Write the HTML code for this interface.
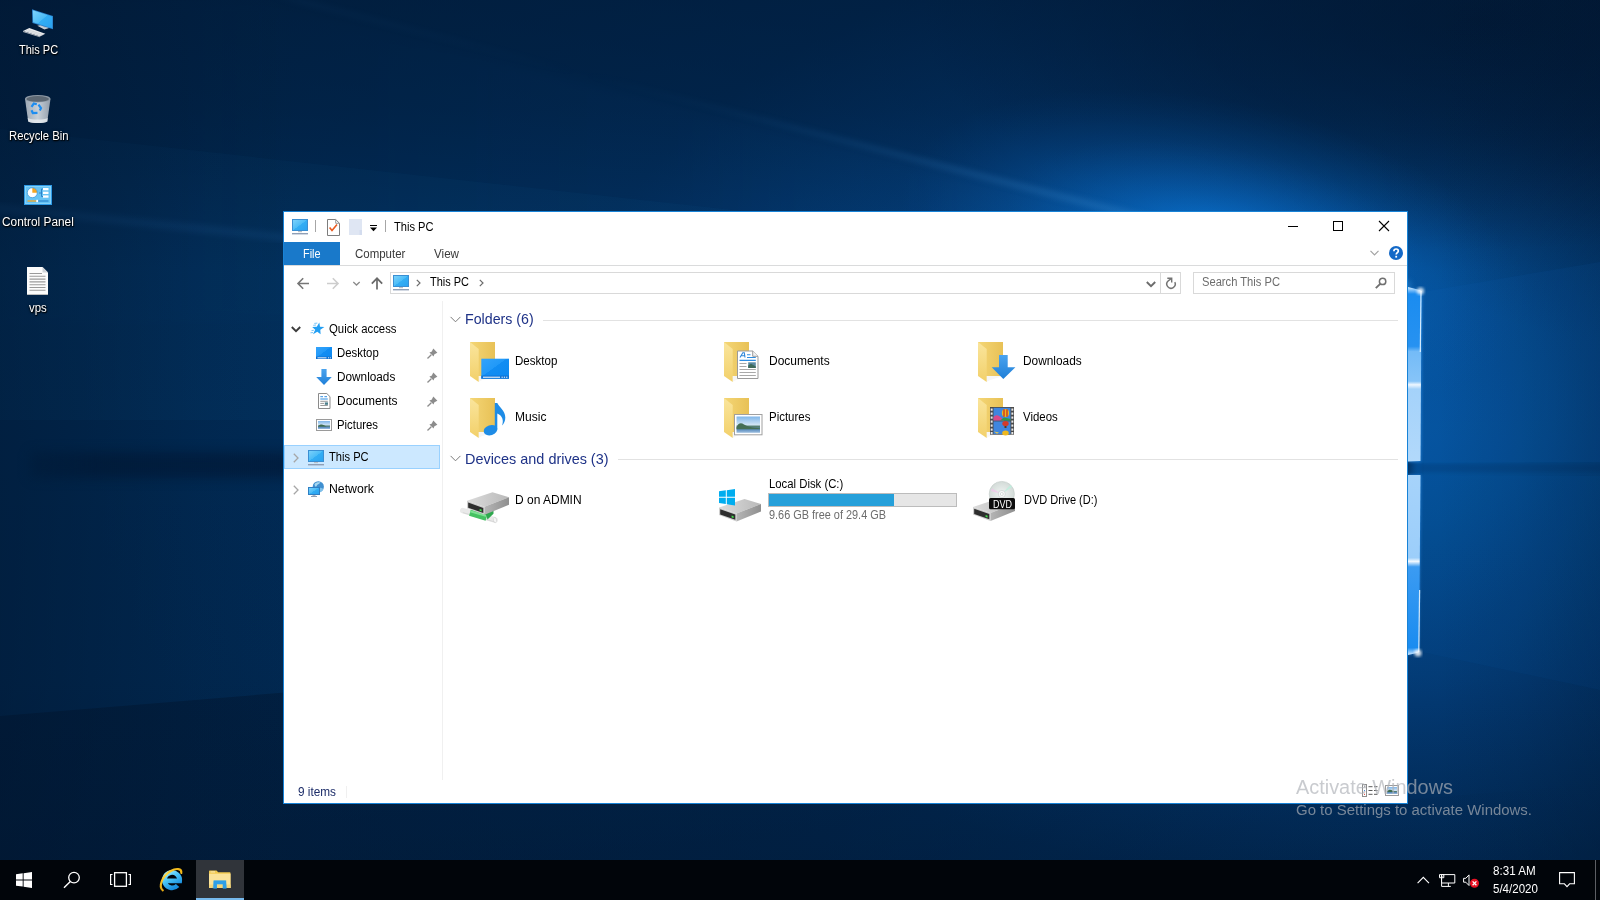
<!DOCTYPE html>
<html lang="en">
<head>
<meta charset="utf-8">
<title>This PC</title>
<style>
*{box-sizing:border-box;margin:0;padding:0}
html,body{width:1600px;height:900px;overflow:hidden;background:#03214a}
body{font-family:"Liberation Sans",sans-serif;font-size:12px;color:#000;position:relative}
#wall,#desk,#win,#wm,#taskbar{position:absolute;left:0;top:0;width:1600px;height:900px;overflow:hidden}
.t{position:absolute;white-space:nowrap;display:block;transform-origin:0 50%}
.sh{text-shadow:0 1px 2px rgba(0,0,0,.95),1px 1px 1px rgba(0,0,0,.8),0 0 3px rgba(0,0,0,.5)}
.b{position:absolute}
svg{position:absolute;overflow:visible}
#wall svg{left:0;top:0}
.frame{left:283px;top:211px;width:1125px;height:593px;background:#fff;border:1px solid #1883d7}
.filetab{left:284px;top:242px;width:56px;height:23px;background:#1979ca}
.hline{height:1px;background:#dadbdc}
.box{border:1px solid #d9d9d9;background:#fff}
.sel{left:284px;top:445px;width:156px;height:24px;background:#cce8ff;border:1px solid #99d1ff}
.tb{left:0;top:860px;width:1600px;height:40px;background:#01050a}
.tbsel{left:196px;top:860px;width:48px;height:40px;background:#30343a}
.tbul{left:196px;top:898px;width:48px;height:2px;background:#76b9ed}

</style>
</head>
<body>
<svg width="0" height="0" style="left:0;top:0">
<defs>
<linearGradient id="scr" x1="0" y1="0" x2="1" y2="1"><stop offset="0" stop-color="#7fd3fb"/><stop offset=".5" stop-color="#4bbcf7"/><stop offset=".51" stop-color="#33aef4"/><stop offset="1" stop-color="#2aa2f0"/></linearGradient>
<linearGradient id="dsk" x1="0" y1="0" x2="1" y2="1"><stop offset="0" stop-color="#33a3fb"/><stop offset=".45" stop-color="#2199f8"/><stop offset=".46" stop-color="#118df3"/><stop offset="1" stop-color="#0c88f0"/></linearGradient>
<linearGradient id="fb" x1="0" y1="0" x2="1" y2="0"><stop offset="0" stop-color="#f4d676"/><stop offset="1" stop-color="#e8c156"/></linearGradient>
<linearGradient id="ff" x1="0" y1="0" x2="0" y2="1"><stop offset="0" stop-color="#fae59c"/><stop offset="1" stop-color="#f2d06a"/></linearGradient>
<linearGradient id="arr" x1="0" y1="0" x2="0" y2="1"><stop offset="0" stop-color="#4aa3ee"/><stop offset="1" stop-color="#1f7fd8"/></linearGradient>
<linearGradient id="sky" x1="0" y1="0" x2="0" y2="1"><stop offset="0" stop-color="#7fb6ea"/><stop offset=".5" stop-color="#cfe4f5"/><stop offset=".62" stop-color="#4f7a6a"/><stop offset=".8" stop-color="#5f8fc0"/><stop offset="1" stop-color="#9fc0e0"/></linearGradient>
<linearGradient id="dtop" x1="0" y1="0" x2="1" y2="0"><stop offset="0" stop-color="#dcdcdc"/><stop offset="1" stop-color="#b9b9b9"/></linearGradient>
<linearGradient id="dside" x1="0" y1="0" x2="1" y2="0"><stop offset="0" stop-color="#b5b5b5"/><stop offset="1" stop-color="#8f8f8f"/></linearGradient>
<radialGradient id="disc" cx=".5" cy=".5" r=".5"><stop offset="0" stop-color="#f4f7f6"/><stop offset=".25" stop-color="#e9eeec"/><stop offset="1" stop-color="#d3dbd8"/></radialGradient>
<linearGradient id="bin" x1="0" y1="0" x2="1" y2="0"><stop offset="0" stop-color="#aab4bf"/><stop offset=".5" stop-color="#d9dfe5"/><stop offset="1" stop-color="#9fa9b5"/></linearGradient>
<!-- reusable icons -->
<g id="i-mon"><rect x=".5" y=".5" width="15" height="11" fill="url(#scr)" stroke="#3a8fd3"/><rect x="6" y="12" width="4" height="1.2" fill="#b9c1c9"/><rect x="0" y="14" width="16" height="1.4" fill="#8f9fb6"/></g>
<g id="i-folder"><rect x="2" y="2" width="25" height="34" fill="url(#fb)"/><polygon points="2,2 10.7,9 10.7,42 2,36" fill="url(#ff)"/><polygon points="10.7,42 13,40.5 27,36 10.7,36" fill="#c9c9c9" opacity=".16"/></g>
<g id="i-pin"><path d="M6.3.6 10.4 4.7 9.3 5.3 7.2 6.4 6.6 8.6 2.4 4.4 4.6 3.8 5.7 1.7Z" fill="#8c8c8c"/><path d="M4.3 6.7.5 10.5" stroke="#8c8c8c" stroke-width="1.3"/></g>
<g id="i-drive"><polygon points="0,8.5 25.5,0 42,5 17.5,14.5" fill="url(#dtop)"/><polygon points="0,8.5 17.5,14.5 17.5,22.5 0,16" fill="#cfcfcf"/><polygon points="1.2,10.3 16.3,15.6 16.3,20.8 1.2,15.4" fill="#2e2e2e"/><polygon points="17.5,14.5 42,5 42,12.5 17.5,22.5" fill="url(#dside)"/><rect x="12.6" y="16.6" width="2" height="1.8" fill="#3fe04a" transform="skewY(19)" transform-origin="12.6 16.6"/></g>
</defs>
</svg>

<div id="wall"><svg width="1600" height="900" viewBox="0 0 1600 900">
<defs>
<radialGradient id="g1" gradientUnits="userSpaceOnUse" cx="1330" cy="400" r="1250" gradientTransform="translate(1330 400) scale(1 .62) translate(-1330 -400)">
<stop offset="0" stop-color="#0557a6"/><stop offset=".18" stop-color="#044d92"/><stop offset=".4" stop-color="#033b76"/><stop offset=".62" stop-color="#012d5b"/><stop offset="1" stop-color="#012850"/>
</radialGradient>
<linearGradient id="g2" x1="0" y1="0" x2="0" y2="1"><stop offset="0" stop-color="#01152e" stop-opacity=".52"/><stop offset=".12" stop-color="#01152e" stop-opacity=".4"/><stop offset=".3" stop-color="#01152e" stop-opacity=".04"/><stop offset=".5" stop-color="#01152e" stop-opacity="0"/><stop offset=".75" stop-color="#01152e" stop-opacity=".05"/><stop offset="1" stop-color="#01122a" stop-opacity=".3"/></linearGradient>
<linearGradient id="gb" gradientUnits="userSpaceOnUse" x1="1410" y1="0" x2="0" y2="0"><stop offset="0" stop-color="#1b84e0" stop-opacity=".55"/><stop offset=".4" stop-color="#1570c8" stop-opacity=".3"/><stop offset="1" stop-color="#0d5aa8" stop-opacity=".05"/></linearGradient>
<linearGradient id="gs" gradientUnits="userSpaceOnUse" x1="1410" y1="0" x2="280" y2="0"><stop offset="0" stop-color="#4aa6f2" stop-opacity=".5"/><stop offset=".5" stop-color="#3f9bea" stop-opacity=".38"/><stop offset="1" stop-color="#3f9bea" stop-opacity=".2"/></linearGradient>
<linearGradient id="gd" gradientUnits="userSpaceOnUse" x1="1410" y1="0" x2="0" y2="0"><stop offset="0" stop-color="#011734" stop-opacity=".8"/><stop offset=".5" stop-color="#011734" stop-opacity=".7"/><stop offset=".93" stop-color="#011734" stop-opacity=".6"/><stop offset="1" stop-color="#011734" stop-opacity=".2"/></linearGradient>
<radialGradient id="gg" cx=".5" cy=".5" r=".5"><stop offset="0" stop-color="#0b82ea" stop-opacity="1"/><stop offset=".45" stop-color="#086cca" stop-opacity=".6"/><stop offset="1" stop-color="#0658aa" stop-opacity="0"/></radialGradient>
<radialGradient id="gk" cx=".5" cy=".5" r=".5"><stop offset="0" stop-color="#01152e" stop-opacity=".7"/><stop offset=".5" stop-color="#01152e" stop-opacity=".45"/><stop offset="1" stop-color="#01152e" stop-opacity="0"/></radialGradient>
<linearGradient id="gl" gradientUnits="userSpaceOnUse" x1="0" y1="0" x2="1600" y2="0"><stop offset="0" stop-color="#01152e" stop-opacity=".5"/><stop offset=".5" stop-color="#01152e" stop-opacity=".36"/><stop offset=".8" stop-color="#01152e" stop-opacity=".1"/><stop offset="1" stop-color="#01152e" stop-opacity="0"/></linearGradient>
<linearGradient id="gv" gradientUnits="userSpaceOnUse" x1="0" y1="0" x2="300" y2="0"><stop offset="0" stop-color="#01142c" stop-opacity=".42"/><stop offset=".33" stop-color="#01142c" stop-opacity=".25"/><stop offset=".66" stop-color="#01142c" stop-opacity=".08"/><stop offset="1" stop-color="#01142c" stop-opacity="0"/></linearGradient>
<linearGradient id="gw" gradientUnits="userSpaceOnUse" x1="1600" y1="0" x2="1440" y2="0"><stop offset="0" stop-color="#01142c" stop-opacity=".3"/><stop offset=".5" stop-color="#01142c" stop-opacity=".12"/><stop offset="1" stop-color="#01142c" stop-opacity="0"/></linearGradient>
<filter color-interpolation-filters="sRGB" id="b6" x="-10%" y="-150%" width="120%" height="400%"><feGaussianBlur stdDeviation="6"/></filter>
<filter color-interpolation-filters="sRGB" id="b2" x="-20%" y="-20%" width="140%" height="140%"><feGaussianBlur stdDeviation="1.5"/></filter>
<filter color-interpolation-filters="sRGB" id="b3" x="-10%" y="-10%" width="120%" height="120%"><feGaussianBlur stdDeviation="3"/></filter>
<linearGradient id="ge" x1="0" y1="0" x2="0" y2="1"><stop offset="0" stop-color="#cfe9ff"/><stop offset=".04" stop-color="#1a8cf0"/><stop offset=".34" stop-color="#2792f1"/><stop offset=".37" stop-color="#74bbf7"/><stop offset=".54" stop-color="#86c4f8"/><stop offset=".56" stop-color="#eef7ff"/><stop offset=".585" stop-color="#a4d2fa"/><stop offset="1" stop-color="#b2d9fb"/></linearGradient><linearGradient id="gf" x1="0" y1="0" x2="0" y2="1"><stop offset="0" stop-color="#a6d3fa"/><stop offset=".46" stop-color="#9ccefa"/><stop offset=".48" stop-color="#f2f9ff"/><stop offset=".51" stop-color="#3b9bf2"/><stop offset=".96" stop-color="#1a8cf0"/><stop offset="1" stop-color="#cfe9ff"/></linearGradient>
</defs>
<rect width="1600" height="900" fill="url(#g1)"/>
<!-- dark top-right corner -->
<ellipse cx="1480" cy="20" rx="560" ry="230" fill="url(#gk)"/>
<ellipse cx="1600" cy="150" rx="230" ry="190" fill="url(#gk)" opacity=".22"/>
<!-- upper beam interior -->
<polygon points="1410,285 260,0 -100,0 -100,330" fill="url(#gb)" opacity=".3" filter="url(#b6)"/>
<!-- bright glow above window right -->
<ellipse cx="1215" cy="250" rx="320" ry="150" fill="url(#gg)" transform="rotate(12 1215 250)"/><ellipse cx="1215" cy="232" rx="210" ry="85" fill="url(#gg)" opacity=".85" transform="rotate(10 1215 232)"/>
<polygon points="1410,285 -100,118 -100,420 1410,420" fill="#2a80d4" opacity=".06"/>
<path d="M-20 206 300 239" stroke="#3f8fe0" stroke-width="7" opacity=".13" filter="url(#b3)"/>
<!-- beam edge highlight -->
<polygon points="1410,282 270,-5 300,0 1410,290" fill="url(#gs)" filter="url(#b3)"/>
<!-- horizon dark band -->
<rect x="30" y="452" width="1380" height="26" fill="url(#gd)" filter="url(#b6)"/>
<rect x="1420" y="464" width="200" height="8" fill="#032150" opacity=".15" filter="url(#b2)"/>
<polygon points="-50,720 1400,601 1400,800 1650,780 1650,950 -50,950" fill="url(#gl)"/>
<rect width="1600" height="900" fill="url(#g2)"/>
<rect width="300" height="900" fill="url(#gv)"/>
<rect x="1440" width="160" height="900" fill="url(#gw)"/>
<!-- right pane faint -->
<polygon points="1422,292 1600,262 1600,462 1422,463" fill="#1a78d8" opacity=".07"/>
<polygon points="1422,475 1600,476 1600,690 1422,652" fill="#1a78d8" opacity=".05"/>
<!-- logo left edge -->
<g filter="url(#b2)"><polygon points="1408,288 1422,291 1421,462 1408,462" fill="#2f93ee" opacity=".7"/><polygon points="1408,475 1421,475 1419,652 1408,655" fill="#2f93ee" opacity=".7"/></g>
<polygon points="1408,287 1421.500,290.500 1420.500,461 1408,461.500" fill="url(#ge)"/>
<polygon points="1408,475 1420.500,475 1419,652.500 1408,655" fill="url(#gf)"/>
<path d="M1421 291 1420.300 352" stroke="#e6f4ff" stroke-width="1.200" opacity=".9"/>
<path d="M1419.600 590 1418.800 652" stroke="#e6f4ff" stroke-width="1.200" opacity=".9"/>
<circle cx="1420.500" cy="291" r="3.500" fill="#fff" opacity=".8" filter="url(#b2)"/>
<circle cx="1418" cy="653" r="3.500" fill="#fff" opacity=".85" filter="url(#b2)"/>
</svg></div>

<div id="desk">
<!-- This PC -->
<svg style="left:22px;top:6px" width="32" height="32" viewBox="0 0 32 32"><polygon points="15.300,19.700 20.700,18.500 27.800,21.800 22.400,23.600" fill="#c9ced4"/><polygon points="19.500,19 22.500,18.300 25.500,21 22.500,21.800" fill="#aeb5bd"/><polygon points="10,3.200 31,10 31,23.300 10.400,17" fill="#2a7fc9"/><polygon points="10.800,4.300 30.200,10.600 30.200,22.200 11.100,16.300" fill="url(#scr)"/><polygon points="1,25 7.300,22 23.300,27.800 18,30.400" fill="#e9eaec"/><polygon points="1,25 18,30.400 18,31.300 1,25.900" fill="#b5b9bf"/><path d="M4 24.700 19 29.700M6 23.800 21 28.800" stroke="#c4c8cd" stroke-width=".6"/></svg>
<!-- Recycle Bin -->
<svg style="left:22px;top:92px" width="32" height="34" viewBox="0 0 32 34"><path d="M3 6.700 6.200 29.500C10 31.500 21.500 31.500 25.300 29.500L28.500 6.700Z" fill="url(#bin)" opacity=".92"/><ellipse cx="15.700" cy="6.700" rx="12.700" ry="3.700" fill="#8e99a5"/><ellipse cx="15.700" cy="6.900" rx="11.300" ry="2.800" fill="#5d6873"/><path d="M6.200 29.500C10 31.500 21.500 31.500 25.300 29.500L25.800 26C21 28 10.500 28 5.700 26Z" fill="#eef1f4" opacity=".7"/><g fill="none" stroke="#1e8df0" stroke-width="2.200"><path d="M9.500 14.800 11.800 11.500 14.800 12.300"/><path d="M16.500 12.700 19 16.200 17.800 18.500"/><path d="M15.500 20.800 10.800 21 9.500 18.200"/></g></svg>
<!-- Control Panel -->
<svg style="left:24px;top:185px" width="28" height="20" viewBox="0 0 28 20"><rect x=".5" y=".5" width="27" height="19" fill="#66c3f4" stroke="#2e9ae6"/><rect x="1.500" y="1.500" width="25" height="17" fill="none" stroke="#8dd6fa" stroke-width=".8"/><circle cx="8.300" cy="7.700" r="5" fill="#fff"/><path d="M8.300 7.700V2.700A5 5 0 0 1 13.300 7.700Z" fill="#f5a623"/><circle cx="8.300" cy="7.700" r="5" fill="none" stroke="#2f8fd8" stroke-width=".7"/><rect x="19" y="3" width="5.500" height="2.300" fill="#fff"/><rect x="19" y="6.700" width="5.500" height="2.300" fill="#fff"/><rect x="19" y="10.400" width="5.500" height="2.300" fill="#fff"/><path d="M15 8H17.500M17.500 4V11.500M17.500 4H19M17.500 11.500H19" stroke="#1f76c2" stroke-width=".8" fill="none"/><path d="M3.500 16H12.500" stroke="#f5a623" stroke-width="1.300"/><path d="M14 16H24.500" stroke="#1f76c2" stroke-width="1"/><rect x="12.300" y="14.800" width="1.800" height="2.400" fill="#fff"/></svg>
<!-- vps text file -->
<svg style="left:27px;top:267px" width="22" height="28" viewBox="0 0 22 28"><path d="M0 0H15.500L21 5.500V28H0Z" fill="#fcfcfc"/><path d="M15.500 0V5.500H21Z" fill="#cfd3d8"/><path d="M2.500 6.500H15M2.500 9.300H18.500M2.500 12.100H18.500M2.500 14.900H18.500M2.500 17.700H18.500M2.500 20.500H18.500M2.500 23.300H18.500" stroke="#9a9a9a" stroke-width="1.100"/><path d="M0 27.500H21" stroke="#bdbdbd" stroke-width="1"/></svg>

<span class="t L-desk sh" style="left:18.7px;top:41.67px;font-size:12.5px;line-height:16px;color:#fff;transform:scaleX(0.8796);">This PC</span>
<span class="t L-desk sh" style="left:8.5px;top:127.97px;font-size:12.5px;line-height:16px;color:#fff;transform:scaleX(0.9015);">Recycle Bin</span>
<span class="t L-desk sh" style="left:2.0px;top:214.47px;font-size:12.5px;line-height:16px;color:#fff;transform:scaleX(0.9479);">Control Panel</span>
<span class="t L-desk sh" style="left:29.3px;top:299.67px;font-size:12.5px;line-height:16px;color:#fff;transform:scaleX(0.9099);">vps</span>
</div>
<div id="win">
<div class="b frame"></div>
<!-- title bar quick access toolbar -->
<svg style="left:292px;top:219px" width="16" height="16"><use href="#i-mon"/></svg>
<div class="b" style="left:315px;top:220px;width:1px;height:12px;background:#a6a6a6"></div>
<svg style="left:327px;top:219px" width="13" height="17" viewBox="0 0 13 17"><path d="M.5.5H8.7L12.5 4.3V16.5H.5Z" fill="#fff" stroke="#7d7d7d"/><path d="M8.7.5V4.3H12.5" fill="none" stroke="#9a9a9a"/><path d="M2.6 8.6 5 11.4 10 5.6" fill="none" stroke="#ea5a1f" stroke-width="1.6"/></svg>
<svg style="left:349px;top:219px" width="13" height="17" viewBox="0 0 13 17"><path d="M0 0H13V16H0Z" fill="#dfe6f3"/><path d="M10.5 11H13V16H10.5Z" fill="#d3dcee"/></svg>
<svg style="left:370px;top:224px" width="8" height="8" viewBox="0 0 8 8"><rect x="0" y="1" width="7" height="1" fill="#000"/><path d="M0 3.6H7L3.5 7.2Z" fill="#000"/></svg>
<div class="b" style="left:385px;top:220px;width:1px;height:12px;background:#a6a6a6"></div>
<!-- caption buttons -->
<svg style="left:1288px;top:221px" width="102" height="11" viewBox="0 0 102 11"><path d="M0 5.5H10" stroke="#000" stroke-width="1"/><rect x="45.5" y=".5" width="9" height="9" fill="none" stroke="#000"/><path d="M91 0 101 10M101 0 91 10" stroke="#000" stroke-width="1.1"/></svg>
<!-- ribbon -->
<div class="b filetab"></div>
<div class="b hline" style="left:284px;top:265px;width:1123px"></div>
<svg style="left:1370px;top:250px" width="9" height="6" viewBox="0 0 9 6"><path d="M.5.8 4.5 4.8 8.5.8" fill="none" stroke="#a3a3a3" stroke-width="1.2"/></svg>
<svg style="left:1389px;top:246px" width="14" height="14" viewBox="0 0 14 14"><circle cx="7" cy="7" r="7" fill="#1469c7"/><path d="M4.9 5.2C4.9 3.6 6 3 7.1 3 8.4 3 9.3 3.8 9.3 4.9 9.3 6.6 7.2 6.7 7.2 8.6" fill="none" stroke="#fff" stroke-width="1.7"/><rect x="6.3" y="9.8" width="1.8" height="1.8" fill="#fff"/></svg>
<!-- nav buttons -->
<svg style="left:297px;top:277px" width="90" height="13" viewBox="0 0 90 13"><path d="M12 6.5H1.2M6.2 1.3 1 6.5 6.2 11.7" fill="none" stroke="#767676" stroke-width="1.6"/><path d="M30 6.5H40.8M35.8 1.3 41 6.5 35.8 11.7" fill="none" stroke="#cdcdcd" stroke-width="1.6"/><path d="M56.3 5 59.5 8 62.7 5" fill="none" stroke="#8a8a8a" stroke-width="1.3"/><path d="M80 12.5V1.4M74.8 6.6 80 1.3 85.2 6.6" fill="none" stroke="#696969" stroke-width="1.7"/></svg>
<!-- address box -->
<div class="b box" style="left:390px;top:272px;width:771px;height:22px"></div>
<div class="b box" style="left:1160px;top:272px;width:21px;height:22px"></div>
<svg style="left:393px;top:275px" width="16" height="16"><use href="#i-mon"/></svg>
<svg style="left:416px;top:279px" width="5" height="8" viewBox="0 0 5 8"><path d="M.8.8 4 4 .8 7.2" fill="none" stroke="#6b6b6b" stroke-width="1.2"/></svg>
<svg style="left:479px;top:279px" width="5" height="8" viewBox="0 0 5 8"><path d="M.8.8 4 4 .8 7.2" fill="none" stroke="#6b6b6b" stroke-width="1.2"/></svg>
<svg style="left:1146px;top:280.800px" width="10" height="7" viewBox="0 0 10 7"><path d="M.8 1 5 5.200 9.200 1" fill="none" stroke="#6c6c6c" stroke-width="1.900"/></svg>
<svg style="left:1165px;top:277px" width="12" height="12" viewBox="0 0 12 12"><path d="M9.800 5.200A4.200 4.200 0 1 1 3.100 4 L6.200 1.600" fill="none" stroke="#747474" stroke-width="1.500"/><path d="M2.300 1.300H6.700V5.600" fill="none" stroke="#747474" stroke-width="1.400"/></svg>
<!-- search box -->
<div class="b box" style="left:1193px;top:272px;width:202px;height:22px"></div>
<svg style="left:1375px;top:277px" width="12" height="12" viewBox="0 0 12 12"><circle cx="7.6" cy="4.4" r="3.2" fill="none" stroke="#707070" stroke-width="1.5"/><path d="M5.2 6.8.8 11.2" stroke="#707070" stroke-width="1.9"/></svg>
<!-- nav pane -->
<div class="b" style="left:442px;top:301px;width:1px;height:479px;background:#f0f0f0"></div>
<div class="b sel"></div>
<svg style="left:291px;top:326px" width="10" height="7" viewBox="0 0 10 7"><path d="M.8 1 5 5.200 9.200 1" fill="none" stroke="#3c3c3c" stroke-width="1.900"/></svg>
<svg style="left:293px;top:453px" width="6" height="10" viewBox="0 0 6 10"><path d="M.8.8 5 5 .8 9.2" fill="none" stroke="#a6a6a6" stroke-width="1.3"/></svg>
<svg style="left:293px;top:485px" width="6" height="10" viewBox="0 0 6 10"><path d="M.8.8 5 5 .8 9.2" fill="none" stroke="#a6a6a6" stroke-width="1.3"/></svg>
<!-- quick access star -->
<svg style="left:310px;top:322px" width="15" height="14" viewBox="0 0 15 14"><polygon points="9.3,0.6 10.0,4.8 14.4,5.0 10.3,7.8 10.6,12.2 7.3,9.7 3.0,12.2 5.2,7.8 2.2,5.0 6.8,4.8" fill="#239ff3"/><path d="M4.300 1.400 7.300 1.100M3.300 3.300 6 3M1.500 8.600 3.800 8.300M.5 10.800 3 10.500" stroke="#7cc6f7" stroke-width="1"/></svg>
<!-- nav desktop -->
<svg style="left:316px;top:347px" width="16" height="12" viewBox="0 0 16 12"><rect width="16" height="12" fill="url(#dsk)"/><rect y="9.6" width="16" height="2.4" fill="#0d6fd0"/><rect x="1.5" y="10.4" width="9" height=".9" fill="#fff"/><rect x="12" y="10.4" width="1" height=".9" fill="#fff"/><rect x="13.8" y="10.4" width="1" height=".9" fill="#fff"/></svg>
<!-- nav downloads -->
<svg style="left:316px;top:369px" width="16" height="16" viewBox="0 0 16 16"><path d="M5.4 0H10.6V8H15.8L8 16 .2 8H5.4Z" fill="url(#arr)"/></svg>
<!-- nav documents -->
<svg style="left:318px;top:393px" width="13" height="16" viewBox="0 0 13 16"><path d="M.5.5H8.8L12 3.7V15.5H.5Z" fill="#fff" stroke="#8b8b8b"/><path d="M2.3 3.7H5M2.3 6H9.8M6.4 3.7H9" stroke="#2f8de0" stroke-width="1"/><path d="M2.3 8.3H9.8M2.3 10.4H6M2.3 12.5H9.8" stroke="#9a9a9a" stroke-width="1"/><rect x="6.8" y="9.4" width="3.2" height="2.4" fill="#4b7f8c"/></svg>
<!-- nav pictures -->
<svg style="left:316px;top:419px" width="16" height="12" viewBox="0 0 16 12"><rect x=".5" y=".5" width="15" height="11" fill="#fff" stroke="#9a9a9a"/><rect x="2" y="2" width="12" height="8" fill="url(#sky)"/><path d="M2 7.2C4 5 6 5 8 6.2L10.5 7.6H2Z" fill="#3e6b4f"/></svg>
<!-- pins -->
<svg style="left:426.5px;top:347.5px" width="11" height="11"><use href="#i-pin"/></svg>
<svg style="left:426.5px;top:371.5px" width="11" height="11"><use href="#i-pin"/></svg>
<svg style="left:426.5px;top:395.5px" width="11" height="11"><use href="#i-pin"/></svg>
<svg style="left:426.5px;top:419.5px" width="11" height="11"><use href="#i-pin"/></svg>
<!-- nav this pc / network -->
<svg style="left:308px;top:450px" width="16" height="16"><use href="#i-mon"/></svg>
<svg style="left:308px;top:481px" width="16" height="16" viewBox="0 0 16 16"><circle cx="10.3" cy="5.8" r="5.6" fill="#3f8fd0"/><path d="M6.5 3.2C8 1 11 .8 12.5 1.6 11 3.5 9.5 3 8.6 5 8 6.5 6.8 5.5 6.5 3.2Z" fill="#a8d8f0"/><path d="M11 7c1.5-.5 3 0 4.3 1-.6 1.7-1.700 2.700-3.300 3.200z" fill="#7fc0ea"/><rect x=".5" y="6.5" width="11" height="7" fill="url(#scr)" stroke="#2f7fc4"/><rect x="4.500" y="14" width="3" height=".8" fill="#9aa7b5"/><rect x="3" y="15" width="6" height="1" fill="#8f9fb6"/></svg>
<!-- group headers -->
<svg style="left:450px;top:316px" width="11" height="7" viewBox="0 0 11 7"><path d="M.6.9 5.5 5.8 10.4.9" fill="none" stroke="#7b7b7b" stroke-width="1"/></svg>
<div class="b" style="left:543px;top:320px;width:855px;height:1px;background:#e2e2e2"></div>
<svg style="left:450px;top:455px" width="11" height="7" viewBox="0 0 11 7"><path d="M.6.9 5.5 5.8 10.4.9" fill="none" stroke="#7b7b7b" stroke-width="1"/></svg>
<div class="b" style="left:618px;top:459px;width:780px;height:1px;background:#e2e2e2"></div>
<!-- folders: Desktop -->
<svg style="left:468px;top:340px" width="48" height="44" viewBox="0 0 48 44"><use href="#i-folder"/><rect x="13.3" y="18.700" width="27.700" height="20" fill="url(#dsk)"/><rect x="13.3" y="35.6" width="27.700" height="3.1" fill="#0e72d4"/><rect x="15" y="36.700" width="17" height="1" fill="#fff"/><rect x="33.5" y="36.700" width="1.3" height="1" fill="#fff"/><rect x="35.8" y="36.700" width="1.3" height="1" fill="#fff"/><rect x="38.100" y="36.700" width="1.3" height="1" fill="#fff"/></svg>
<!-- Documents -->
<svg style="left:722px;top:340px" width="48" height="44" viewBox="0 0 48 44"><use href="#i-folder"/><path d="M15.500 11H30.700L36 16.300V38.500H15.500Z" fill="#fff" stroke="#9b9b9b"/><path d="M30.700 11V16.300H36" fill="#f1f1f1" stroke="#9b9b9b"/><path d="M18 17.500 20.800 12.800H22.300L23 17.500M19.300 15.800H22.600" fill="none" stroke="#2d86da" stroke-width="1.1"/><path d="M25 14.800H28.500M25 17.500H33.800M17.500 20.400H33.800" stroke="#2d8de2" stroke-width="1.1"/><path d="M17.500 23.500H24.500M17.500 26.500H24.500M17.500 29.500H33.800M17.500 32.500H33.800M17.500 35.500H33.800" stroke="#a9a9a9" stroke-width="1"/><rect x="26.200" y="22.300" width="7.600" height="5.600" fill="#5d8aa0"/><path d="M26.200 27.900V25.500L29 23.800 33.800 26.500V27.900Z" fill="#3f6a5a"/></svg>
<!-- Downloads -->
<svg style="left:976px;top:340px" width="48" height="44" viewBox="0 0 48 44"><use href="#i-folder"/><path d="M23 15H31.700V27.300H39.400L27.300 39.100 15.700 27.300H23Z" fill="url(#arr)"/></svg>
<!-- Music -->
<svg style="left:468px;top:396px" width="48" height="44" viewBox="0 0 48 44"><use href="#i-folder"/><ellipse cx="22.500" cy="34.200" rx="7" ry="5" fill="#1e8ce6" transform="rotate(-18 22.500 34.200)"/><path d="M26.800 7H29.300C30.500 10.500 37.300 14.500 37.300 21.500 37.300 25 36 27.500 34 29.500 36 25 34.500 19.500 29.300 17.500V33.500H26.800Z" fill="#1e8ce6"/></svg>
<!-- Pictures -->
<svg style="left:722px;top:396px" width="48" height="44" viewBox="0 0 48 44"><use href="#i-folder"/><rect x="12.500" y="18.500" width="27.500" height="20.300" fill="#fff" stroke="#a0a0a0"/><rect x="14.500" y="20.500" width="23.500" height="16.300" fill="url(#sky)"/><path d="M14.500 31.500C16 27 19 26 22 28.500 26 31 30 31.500 38 32.300V33.300H14.500Z" fill="#456f55"/></svg>
<!-- Videos -->
<svg style="left:976px;top:396px" width="48" height="44" viewBox="0 0 48 44"><use href="#i-folder"/><rect x="14" y="11" width="24" height="27.700" fill="#4a4a4a"/><rect x="17.500" y="11.800" width="17" height="12.600" fill="#3f86df"/><rect x="17.500" y="25.400" width="17" height="12.600" fill="#3f86df"/><g fill="#e9e9e9"><rect x="14.700" y="12.500" width="1.900" height="2.200"/><rect x="14.700" y="16.500" width="1.900" height="2.200"/><rect x="14.700" y="20.500" width="1.900" height="2.200"/><rect x="14.700" y="24.500" width="1.900" height="2.200"/><rect x="14.700" y="28.500" width="1.900" height="2.200"/><rect x="14.700" y="32.500" width="1.900" height="2.200"/><rect x="14.700" y="36" width="1.900" height="2.200"/><rect x="35.400" y="12.500" width="1.900" height="2.200"/><rect x="35.400" y="16.500" width="1.900" height="2.200"/><rect x="35.400" y="20.500" width="1.900" height="2.200"/><rect x="35.400" y="24.500" width="1.900" height="2.200"/><rect x="35.400" y="28.500" width="1.900" height="2.200"/><rect x="35.400" y="32.500" width="1.900" height="2.200"/><rect x="35.400" y="36" width="1.900" height="2.200"/></g><ellipse cx="29.500" cy="17" rx="3.600" ry="4" fill="#f0b81f"/><path d="M28 13.300V20.700M31 13.300V20.700" stroke="#c9311f" stroke-width="1.300"/><path d="M17.500 21C20 18 23 19 25 21.500L28 24.400H17.500Z" fill="#d94a8a"/><path d="M24 24.400 28 21.500 34.500 23V24.400Z" fill="#2f9a4a"/><ellipse cx="29.500" cy="27.500" rx="3.200" ry="2.600" fill="#d43a2a"/><rect x="28.500" y="30" width="2" height="2" fill="#5a3a1a"/><ellipse cx="29.500" cy="37" rx="3.300" ry="2.500" fill="#f0b81f"/><path d="M18 35.500 23 36.500 21 37.800Z" fill="#e8c84a"/></svg>
<!-- drives: D on ADMIN -->
<svg style="left:462px;top:492px" width="48" height="32" viewBox="0 0 48 32"><path d="M.8 18.600 33 28" stroke="#e9e9e9" stroke-width="5.600" stroke-linecap="round"/><path d="M.8 20.600 33 30" stroke="#cfcfcf" stroke-width="1" opacity=".7"/><path d="M8 20.700 24.500 25.500" stroke="#45c262" stroke-width="6.600"/><path d="M8.300 19.300 24.800 24.100" stroke="#7fe294" stroke-width="2"/><path d="M23.500 21.500 31.500 18.300V21.800L25.500 27.500Z" fill="#2fa84e"/><ellipse cx="33" cy="28" rx="1.600" ry="2.800" fill="#f6f6f6" stroke="#c9c9c9" stroke-width=".5" transform="rotate(-15 33 28)"/><g transform="translate(5 .3)"><use href="#i-drive"/></g></svg>
<!-- Local Disk -->
<svg style="left:719px;top:489px" width="44" height="33" viewBox="0 0 44 33"><g transform="translate(0 10)"><use href="#i-drive"/></g><path d="M0 2.300 6.800 1.300V7.700H0ZM7.800 1.200 16 0V7.700H7.800ZM0 8.700H6.800V15.100L0 14.100ZM7.800 8.700H16V16.400L7.800 15.200Z" fill="#00adef"/></svg>
<div class="b" style="left:768px;top:493px;width:189px;height:14px;border:1px solid #bcbcbc;background:#e6e6e6"></div>
<div class="b" style="left:769px;top:494px;width:125px;height:12px;background:#26a0da"></div>
<!-- DVD -->
<svg style="left:973px;top:480px" width="44" height="42" viewBox="0 0 44 42"><g transform="translate(0 18.500)"><use href="#i-drive"/></g><circle cx="28.800" cy="14" r="12.600" fill="url(#disc)" stroke="#c3cbc8" stroke-width=".6"/><path d="M28.800 14 19 8.500 18 11Z" fill="#f0c8ea" opacity=".8"/><path d="M28.800 14 37.500 5 39 7Z" fill="#bfeedd" opacity=".9"/><circle cx="28.800" cy="14" r="3.600" fill="#f7f9f8" stroke="#c9d0ce" stroke-width=".7"/><circle cx="28.800" cy="14" r="1.500" fill="#fff" stroke="#c0c7c5" stroke-width=".6"/><rect x="16" y="18" width="26" height="11.300" rx="1.600" fill="#0d0d0d"/></svg>
<div class="b" style="left:346px;top:786px;width:1px;height:12px;background:#f0f0f0"></div>
<!-- status bar view icons -->
<svg style="left:1362px;top:784px" width="16" height="13" viewBox="0 0 16 13"><rect x=".5" y=".5" width="4" height="12" fill="#fff" stroke="#8e8e8e"/><rect x="2" y="2.200" width="1" height="1" fill="#7a7a7a"/><rect x="2" y="6" width="1" height="1" fill="#3f8fe8"/><rect x="2" y="9.800" width="1" height="1" fill="#e03a2a"/><path d="M6.500 2.700H10.500M12 2.700H15.500M6.500 6.500H10.500M12 6.500H15.500M6.500 10.300H10.500M12 10.300H15.500" stroke="#5a5a5a" stroke-width="1"/></svg>
<svg style="left:1385px;top:785px" width="14" height="11" viewBox="0 0 14 11"><rect x=".5" y=".5" width="13" height="10" fill="#fff" stroke="#9a9a9a"/><rect x="2" y="2" width="10" height="7" fill="url(#sky)"/><path d="M2 6.500C4 4 6 4.500 8 6L9.500 7H2Z" fill="#3e6b4f"/></svg>

<span class="t L-win" style="left:393.5px;top:218.67px;font-size:12.5px;line-height:16px;color:#000;transform:scaleX(0.8886);">This PC</span>
<span class="t L-win" style="left:303.4px;top:245.67px;font-size:12.5px;line-height:16px;color:#fff;transform:scaleX(0.8732);">File</span>
<span class="t L-win" style="left:354.6px;top:245.67px;font-size:12.5px;line-height:16px;color:#3a3a3a;transform:scaleX(0.9182);">Computer</span>
<span class="t L-win" style="left:434.0px;top:245.67px;font-size:12.5px;line-height:16px;color:#3a3a3a;transform:scaleX(0.9302);">View</span>
<span class="t L-win" style="left:430.0px;top:273.97px;font-size:12.5px;line-height:16px;color:#000;transform:scaleX(0.8773);">This PC</span>
<span class="t L-win" style="left:1202.0px;top:274.47px;font-size:12.5px;line-height:16px;color:#6d6d6d;transform:scaleX(0.8933);">Search This PC</span>
<span class="t L-win" style="left:329.2px;top:320.67px;font-size:12.5px;line-height:16px;color:#000;transform:scaleX(0.9079);">Quick access</span>
<span class="t L-win" style="left:337.0px;top:344.67px;font-size:12.5px;line-height:16px;color:#000;transform:scaleX(0.9093);">Desktop</span>
<span class="t L-win" style="left:337.0px;top:368.67px;font-size:12.5px;line-height:16px;color:#000;transform:scaleX(0.9427);">Downloads</span>
<span class="t L-win" style="left:337.0px;top:392.67px;font-size:12.5px;line-height:16px;color:#000;transform:scaleX(0.9568);">Documents</span>
<span class="t L-win" style="left:337.0px;top:416.67px;font-size:12.5px;line-height:16px;color:#000;transform:scaleX(0.9080);">Pictures</span>
<span class="t L-win" style="left:329.0px;top:448.67px;font-size:12.5px;line-height:16px;color:#000;transform:scaleX(0.8908);">This PC</span>
<span class="t L-win" style="left:329.0px;top:480.67px;font-size:12.5px;line-height:16px;color:#000;transform:scaleX(0.9816);">Network</span>
<span class="t L-win" style="left:464.6px;top:310.48px;font-size:14.5px;line-height:19px;color:#1e3287;transform:scaleX(0.9799);">Folders (6)</span>
<span class="t L-win" style="left:464.8px;top:449.78px;font-size:14.5px;line-height:19px;color:#1e3287;transform:scaleX(0.9948);">Devices and drives (3)</span>
<span class="t L-win" style="left:515.2px;top:352.67px;font-size:12.5px;line-height:16px;color:#000;transform:scaleX(0.9224);">Desktop</span>
<span class="t L-win" style="left:769.3px;top:352.67px;font-size:12.5px;line-height:16px;color:#000;transform:scaleX(0.9599);">Documents</span>
<span class="t L-win" style="left:1023.3px;top:352.67px;font-size:12.5px;line-height:16px;color:#000;transform:scaleX(0.9492);">Downloads</span>
<span class="t L-win" style="left:515.2px;top:408.67px;font-size:12.5px;line-height:16px;color:#000;transform:scaleX(0.9615);">Music</span>
<span class="t L-win" style="left:769.3px;top:408.67px;font-size:12.5px;line-height:16px;color:#000;transform:scaleX(0.9168);">Pictures</span>
<span class="t L-win" style="left:1023.3px;top:408.67px;font-size:12.5px;line-height:16px;color:#000;transform:scaleX(0.9132);">Videos</span>
<span class="t L-win" style="left:515.4px;top:491.67px;font-size:12.5px;line-height:16px;color:#000;transform:scaleX(0.9587);">D on ADMIN</span>
<span class="t L-win" style="left:769.3px;top:475.67px;font-size:12.5px;line-height:16px;color:#000;transform:scaleX(0.9064);">Local Disk (C:)</span>
<span class="t L-win" style="left:769.3px;top:506.87px;font-size:12.5px;line-height:16px;color:#6d6d6d;transform:scaleX(0.8724);">9.66 GB free of 29.4 GB</span>
<span class="t L-win" style="left:1023.5px;top:491.67px;font-size:12.5px;line-height:16px;color:#000;transform:scaleX(0.8819);">DVD Drive (D:)</span>
<span class="t L-win" style="left:992.5px;top:496.66px;font-size:10.5px;line-height:14px;color:#fff;transform:scaleX(0.8569);">DVD</span>
<span class="t L-win" style="left:298.0px;top:783.67px;font-size:12.5px;line-height:16px;color:#1c2c68;transform:scaleX(0.9430);">9 items</span>
</div>
<div id="wm">
<span class="t L-wm" style="left:1295.5px;top:774.74px;font-size:19.5px;line-height:25px;color:rgba(176,178,184,.68);transform:scaleX(1.0202);">Activate Windows</span>
<span class="t L-wm" style="left:1295.5px;top:800.65px;font-size:14px;line-height:18px;color:rgba(176,178,184,.68);transform:scaleX(1.0679);">Go to Settings to activate Windows.</span>
</div>
<div id="taskbar">
<div class="b tb"></div>
<div class="b tbsel"></div>
<div class="b tbul"></div>
<!-- start -->
<svg style="left:16px;top:872px" width="16" height="16" viewBox="0 0 16 16"><path d="M0 2.300 6.700 1.300V7.500H0ZM7.600 1.200 16 0V7.500H7.600ZM0 8.400H6.700V14.600L0 13.700ZM7.600 8.400H16V16L7.600 14.800Z" fill="#fff"/></svg>
<!-- search -->
<svg style="left:63px;top:871px" width="18" height="18" viewBox="0 0 18 18"><circle cx="11" cy="6.600" r="5.300" fill="none" stroke="#fff" stroke-width="1.300"/><path d="M7.300 10.400 1 16.700" stroke="#fff" stroke-width="1.400"/></svg>
<!-- task view -->
<svg style="left:110px;top:872px" width="21" height="15" viewBox="0 0 21 15"><rect x="4.600" y=".7" width="11.800" height="13.600" fill="none" stroke="#fff" stroke-width="1.300"/><path d="M2.500 2.500H.6V12.500H2.500M18.500 2.500H20.400V12.500H18.500" fill="none" stroke="#fff" stroke-width="1.200"/></svg>
<!-- IE -->
<svg style="left:159px;top:867px" width="25" height="25" viewBox="0 0 25 25"><defs><linearGradient id="ieg" x1="0" y1="0" x2=".6" y2="1"><stop offset="0" stop-color="#9eeaff"/><stop offset=".45" stop-color="#4cc6f7"/><stop offset="1" stop-color="#1a90e0"/></linearGradient><linearGradient id="ier" x1="0" y1="1" x2="1" y2="0"><stop offset="0" stop-color="#e8a80c"/><stop offset=".5" stop-color="#ffd94a"/><stop offset="1" stop-color="#eeb211"/></linearGradient></defs><path d="M6 13.900H20.700A7.700 7.700 0 1 0 18.600 18.500" fill="none" stroke="url(#ieg)" stroke-width="4.700"/><path d="M3.800 23.400C-.8 19.800 2.800 9.300 11.800 4 17.300 .9 22.900 1.500 22.300 6" fill="none" stroke="url(#ier)" stroke-width="2.100" stroke-linecap="round"/></svg>
<!-- explorer -->
<svg style="left:208px;top:870px" width="24" height="20" viewBox="0 0 24 20"><path d="M1 1.500C1 .9 1.400.5 2 .5H8.500L10.200 2.200H21.500C22.100 2.200 22.500 2.600 22.500 3.200V18H1Z" fill="#f2c94f"/><rect x="1" y="3.700" width="21.500" height="14.300" fill="#fbe39a"/><path d="M1 14.500H22.500V18H1Z" fill="#f5d67a"/><path d="M5.500 10.500H18.200V18.500H14.800V14.300H8.900V18.500H5.500Z" fill="#33a3ea"/><path d="M4.500 18.500 6 10.500H17.700L19.200 18.500H14.800V14.300H8.900V18.500Z" fill="#2a9be6" opacity=".5"/><rect x="2.500" y="1.500" width="4.500" height=".9" fill="#fff" opacity=".7"/></svg>
<!-- tray -->
<svg style="left:1417px;top:876px" width="13" height="8" viewBox="0 0 13 8"><path d="M.6 7.200 6.300 1.300 12 7.200" fill="none" stroke="#fff" stroke-width="1.100"/></svg>
<svg style="left:1439px;top:874px" width="17" height="13" viewBox="0 0 17 13"><path d="M2.500 .6H15.800V9H2.500ZM7 12.400H11.800M9.400 9V12.400" fill="none" stroke="#fff" stroke-width="1"/><path d="M.5 .6H4.800V3.700H.5ZM2.600 3.700V12.400H7" fill="none" stroke="#fff" stroke-width="1"/><path d="M1.800 2.600 2.600 3.300 3.800 1.800" fill="none" stroke="#fff" stroke-width=".7"/></svg>
<svg style="left:1463px;top:874px" width="18" height="14" viewBox="0 0 18 14"><path d="M.6 4.300H2.800L6 .9V11.500L2.800 8.200H.6Z" fill="none" stroke="#fff" stroke-width="1"/><circle cx="11.500" cy="9.300" r="4.500" fill="#e81123"/><path d="M9.600 7.400 13.400 11.200M13.400 7.400 9.600 11.200" stroke="#fff" stroke-width="1.300"/></svg>
<svg style="left:1559px;top:872px" width="16" height="16" viewBox="0 0 16 16"><path d="M.6 .6H15.400V11.800H10.600L8 14.600 5.400 11.800H.6Z" fill="none" stroke="#fff" stroke-width="1.100"/></svg>
<div class="b" style="left:1595px;top:860px;width:1px;height:40px;background:#5c5f64"></div>

<span class="t L-task" style="left:1493.0px;top:862.67px;font-size:12.5px;line-height:16px;color:#fff;transform:scaleX(0.9286);">8:31 AM</span>
<span class="t L-task" style="left:1493.0px;top:880.67px;font-size:12.5px;line-height:16px;color:#fff;transform:scaleX(0.9225);">5/4/2020</span>
</div>
</body>
</html>
